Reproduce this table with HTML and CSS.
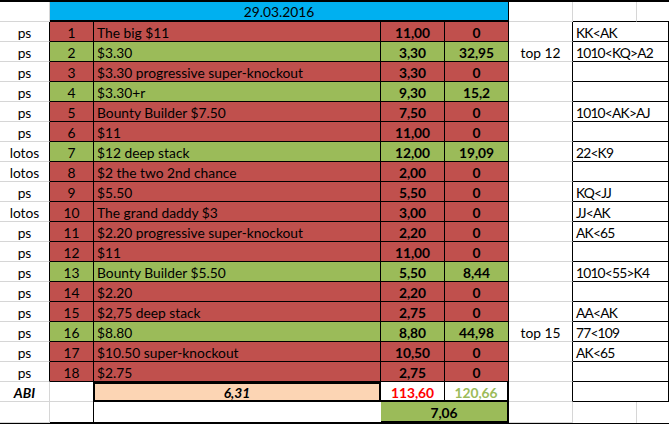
FILE: index.html
```html
<!DOCTYPE html>
<html>
<head>
<meta charset="utf-8">
<link rel="stylesheet" href="styles.css">
</head>
<body>
<div class="sheet" id="sheet">
  <div class="c"></div>
  <div class="c head">29.03.2016</div>
  <div class="c f"></div>
  <div class="c hg"></div>
  <div class="c hh"></div>
</div>
<script src="app.js"></script>
</body>
</html>
```
FILE: app.js
```js
const rows = [
  ["ps","1","The big $11","11,00","0","","KK<AK","r"],
  ["ps","2","$3.30","3,30","32,95","top 12","1010<KQ>A2","g"],
  ["ps","3","$3.30 progressive super-knockout","3,30","0","","","r"],
  ["ps","4","$3.30+r","9,30","15,2","","","g"],
  ["ps","5","Bounty Builder $7.50","7,50","0","","1010<AK>AJ","r"],
  ["ps","6","$11","11,00","0","","","r"],
  ["lotos","7","$12 deep stack","12,00","19,09","","22<K9","g"],
  ["lotos","8","$2 the two 2nd chance","2,00","0","","","r"],
  ["ps","9","$5.50","5,50","0","","KQ<JJ","r"],
  ["lotos","10","The grand daddy $3","3,00","0","","JJ<AK","r"],
  ["ps","11","$2.20 progressive super-knockout","2,20","0","","AK<65","r"],
  ["ps","12","$11","11,00","0","","","r"],
  ["ps","13","Bounty Builder $5.50","5,50","8,44","","1010<55>K4","g"],
  ["ps","14","$2.20","2,20","0","","","r"],
  ["ps","15","$2,75 deep stack","2,75","0","","AA<AK","r"],
  ["ps","16","$8.80","8,80","44,98","top 15","77<109","g"],
  ["ps","17","$10.50 super-knockout","10,50","0","","AK<65","r"],
  ["ps","18","$2.75","2,75","0","","","r"]
];
const sheet = document.getElementById("sheet");
function cell(cls, text) {
  const d = document.createElement("div");
  d.className = "c " + cls;
  d.textContent = text;
  sheet.appendChild(d);
}
rows.forEach(r => {
  const k = r[7];
  cell("a dk", r[0]);
  cell("b " + k, r[1]);
  cell("t " + k, r[2]);
  cell("n " + k, r[3]);
  cell("n e " + k, r[4]);
  cell("f dk", r[5]);
  cell("hand", r[6]);
});
cell("a abi", "ABI");
cell("b w", "");
cell("peach", "6,31");
cell("red-t", "113,60");
cell("grn-t", "120,66");
cell("f dk", "");
cell("hand", "");
cell("a last", "");
cell("b last", "");
cell("t last", "");
cell("total", "7,06");
cell("f last", "");
cell("hg last", "");
cell("hh last", "");
```
FILE: styles.css
```css
html, body {
  margin: 0;
  padding: 0;
  background: #fff;
}
.sheet {
  width: 669px;
  height: 424px;
  box-sizing: border-box;
  border-top: 2px solid #000;
  border-bottom: 1px solid #000;
  display: grid;
  grid-template-columns: 50px 44px 287px 64px 64px 64px 64px 32px;
  grid-template-rows: 20px repeat(19, 20px) 21px;
  font-family: Lato, "Liberation Sans", sans-serif;
  font-size: 13.8px;
  color: #000;
  overflow: hidden;
}
.c {
  box-sizing: border-box;
  border-right: 1px solid #d6d6d6;
  border-bottom: 1px solid #d6d6d6;
  line-height: 19px;
  padding-top: 1px;
  white-space: nowrap;
  overflow: hidden;
  text-align: center;
}
.head {
  grid-column: 2 / span 4;
  background: #00b0f0;
  border-bottom: 2px solid #000;
  border-right: 1px solid #000;
  line-height: 18px;
  padding-top: 1px;
}
.hg {
  border-bottom-color: #000;
}
.hh {
  border-bottom-color: #000;
  border-right: none;
}
.a.dk {
  border-right-color: #000;
}
.b, .t, .n {
  border-right-color: #000;
  border-bottom-color: #000;
}
.t {
  text-align: left;
  padding-left: 3px;
}
.n {
  font-weight: 700;
}
.r {
  background: #c0504d;
}
.g {
  background: #9bbb59;
}
.f.dk {
  border-right-color: #000;
}
.hand {
  grid-column: 7 / span 2;
  border-right: 1px solid #000;
  border-bottom: 1px solid #000;
  text-align: left;
  padding-left: 3px;
  letter-spacing: -0.8px;
}
.abi {
  font-weight: 700;
  font-style: italic;
}
.b.w {
  border-right: none;
  border-bottom-color: #d6d6d6;
}
.peach {
  margin-left: -1px;
  background: #fcd5b4;
  border: 2px solid #000;
  font-weight: 700;
  font-style: italic;
  line-height: 16px;
}
.red-t {
  color: #ff0000;
  font-weight: 700;
  border-right-color: #000;
  border-bottom: 2px solid #000;
}
.grn-t {
  color: #9bbb59;
  font-weight: 700;
  border-right: 2px solid #000;
  border-bottom: 2px solid #000;
}
.total {
  grid-column: 4 / span 2;
  background: #9bbb59;
  border-right: 2px solid #000;
  border-bottom: 2px solid #000;
  font-weight: 700;
}
.t.last {
  border-right: none;
}
.hh.last {
  border-bottom: none;
}
.hg.last {
  border-bottom: none;
}
```
